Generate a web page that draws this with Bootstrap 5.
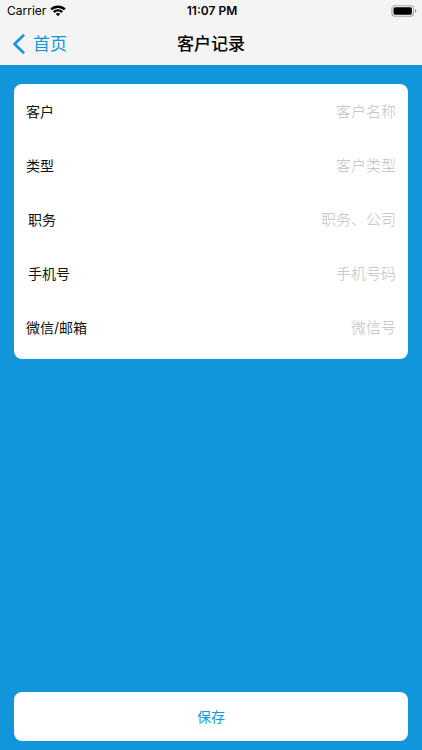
<!DOCTYPE html>
<html lang="zh-CN">
<head>
<meta charset="utf-8">
<meta name="viewport" content="width=device-width, initial-scale=1">
<title>客户记录</title>
<link href="https://cdn.jsdelivr.net/npm/bootstrap@5.3.0/dist/css/bootstrap.min.css" rel="stylesheet">
<style>
  :root { --brand: #1296db; --bar: #f4f4f4; }
  body { background: var(--brand); font-family: Inter, "Noto Sans CJK SC", sans-serif; font-size: 14px; line-height: 20px; color: #111; }
  .app-header { background: var(--bar); }
  .status-bar { height: 22px; padding: 0 5px 0 7px; font-size: 12px; }
  .title-bar { height: 43px; }
  .title-bar h1 { font-size: 17px; line-height: 24px; font-weight: 500; color: #000; }
  .back-link { color: var(--brand); gap: 8px; font-size: 17px; line-height: 24px; }
  .page-body { padding: 19px 14px 9px; }
  .panel { border-radius: 8px; padding: 1px 12px 4px; }
  .form-line { height: 54px; }
  .form-line label.indented { padding-left: 2px; }
  .form-line input { font-size: 15px; line-height: 20px; color: #111; min-width: 0; }
  .form-line input::placeholder { color: #bfbfc3; opacity: 1; font-weight: 300; }
  .save-btn { height: 49px; border-radius: 8px; font-size: 14px; color: var(--brand); background: #fff; }
  .save-btn:hover { color: var(--brand); background: #f4f4f4; }
</style>
<script src="https://cdn.jsdelivr.net/npm/bootstrap@5.3.0/dist/js/bootstrap.bundle.min.js"></script>
</head>
<body class="min-vh-100 d-flex flex-column">
  <header class="app-header">
    <div class="status-bar row g-0 align-items-center text-black">
      <div class="col d-flex align-items-center gap-1">
        <span>Carrier</span>
        <svg width="16" height="12" viewBox="0 0 16 12" aria-hidden="true">
          <path d="M8 .5C5 .5 2.300 1.700.3 3.600L2 5.300C3.600 3.800 5.700 2.900 8 2.900s4.400.9 6 2.400l1.700-1.700C13.700 1.700 11 .5 8 .5zM8 4.200c-2 0-3.700.8-5 2l1.700 1.700C5.500 7.100 6.700 6.600 8 6.600s2.500.5 3.300 1.300L13 6.200c-1.300-1.200-3-2-5-2zM8 7.900c-.9 0-1.700.3-2.300.9L8 11.200l2.300-2.400C9.700 8.200 8.900 7.900 8 7.900z"/>
        </svg>
      </div>
      <div class="col-auto fw-semibold">11:07 PM</div>
      <div class="col d-flex justify-content-end">
        <svg width="26" height="12" viewBox="0 0 26 12" aria-hidden="true">
          <rect x=".9" y=".7" width="21.600" height="10.600" rx="3" fill="none" stroke="#a6a6a6" stroke-width="1.100"/>
          <rect x="2.500" y="2.300" width="18.400" height="7.400" rx="1.600"/>
          <path d="M24 4.100v3.800c.8-.3 1.300-1 1.300-1.900S24.800 4.400 24 4.100z" fill="#999"/>
        </svg>
      </div>
    </div>
    <nav class="title-bar row g-0 align-items-center px-2">
      <div class="col d-flex">
        <a href="#" class="back-link d-flex align-items-center text-decoration-none ps-1">
          <svg width="13" height="20" viewBox="0 0 13 20" fill="none" stroke="currentColor" stroke-width="2.600" stroke-linecap="round" stroke-linejoin="round" aria-hidden="true"><path d="M11.300 1.500 2.500 10l8.800 8.500"/></svg>
          <span>首页</span>
        </a>
      </div>
      <h1 class="col-auto m-0">客户记录</h1>
      <div class="col"></div>
    </nav>
  </header>
  <main class="page-body flex-grow-1 d-flex flex-column">
    <form class="flex-grow-1 d-flex flex-column justify-content-between">
      <div class="panel bg-white">
        <div class="form-line d-flex align-items-center">
          <label for="customer" class="text-nowrap">客户</label>
          <input id="customer" type="text" class="form-control-plaintext flex-fill text-end p-0" placeholder="客户名称">
        </div>
        <div class="form-line d-flex align-items-center">
          <label for="kind" class="text-nowrap">类型</label>
          <input id="kind" type="text" class="form-control-plaintext flex-fill text-end p-0" placeholder="客户类型">
        </div>
        <div class="form-line d-flex align-items-center">
          <label for="job" class="indented text-nowrap">职务</label>
          <input id="job" type="text" class="form-control-plaintext flex-fill text-end p-0" placeholder="职务、公司">
        </div>
        <div class="form-line d-flex align-items-center">
          <label for="phone" class="indented text-nowrap">手机号</label>
          <input id="phone" type="tel" class="form-control-plaintext flex-fill text-end p-0" placeholder="手机号码">
        </div>
        <div class="form-line d-flex align-items-center">
          <label for="wechat" class="text-nowrap">微信/邮箱</label>
          <input id="wechat" type="text" class="form-control-plaintext flex-fill text-end p-0" placeholder="微信号">
        </div>
      </div>
      <button type="button" class="save-btn btn border-0 w-100">保存</button>
    </form>
  </main>
</body>
</html>
